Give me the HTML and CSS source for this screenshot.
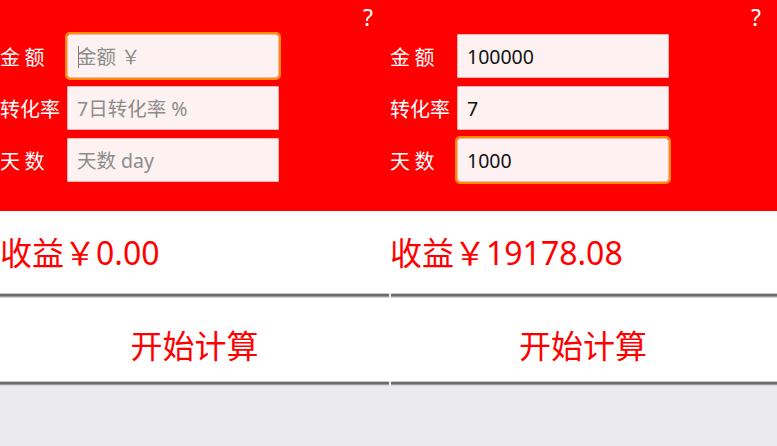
FILE: index.html
```html
<!DOCTYPE html>
<html lang="zh-CN">
<head>
<meta charset="utf-8">
<title>收益计算</title>
<link rel="stylesheet" href="styles.css">
</head>
<body>
<div class="app">
  <section class="screen screen-left">
    <div class="header">
      <div class="help">?</div>
      <div class="row">
        <label class="label">金 额</label>
        <div class="field focused caret"><input class="input" type="text" placeholder="金额 ￥"></div>
      </div>
      <div class="row">
        <label class="label">转化率</label>
        <div class="field"><input class="input" type="text" placeholder="7日转化率 %"></div>
      </div>
      <div class="row">
        <label class="label">天 数</label>
        <div class="field"><input class="input" type="text" placeholder="天数 day"></div>
      </div>
    </div>
    <div class="result">收益￥0.00</div>
    <div class="divider"></div>
    <div class="button">开始计算</div>
    <div class="divider"></div>
    <div class="rest"></div>
  </section>
  <section class="screen screen-right">
    <div class="header">
      <div class="help">?</div>
      <div class="row">
        <label class="label">金 额</label>
        <div class="field"><input class="input" type="text" value="100000"></div>
      </div>
      <div class="row">
        <label class="label">转化率</label>
        <div class="field"><input class="input" type="text" value="7"></div>
      </div>
      <div class="row">
        <label class="label">天 数</label>
        <div class="field focused"><input class="input" type="text" value="1000"></div>
      </div>
    </div>
    <div class="result">收益￥19178.08</div>
    <div class="divider"></div>
    <div class="button">开始计算</div>
    <div class="divider"></div>
    <div class="rest"></div>
  </section>
</div>
</body>
</html>
```

FILE: styles.css
```css
html, body {
  margin: 0;
  padding: 0;
}

body {
  width: 777px;
  height: 446px;
  overflow: hidden;
  background: #ebebed;
  font-family: "Noto Sans", "Noto Sans CJK SC", sans-serif;
}

.app {
  display: flex;
  width: 777px;
  height: 446px;
}

.screen {
  display: flex;
  flex-direction: column;
  height: 446px;
}

.screen-left {
  width: 389px;
}

.screen-right {
  width: 388px;
}

.header {
  background: #ff0000;
  height: 211px;
  box-sizing: border-box;
  display: flex;
  flex-direction: column;
  gap: 8px;
}

.help {
  height: 26px;
  color: #ffffff;
  font-size: 23px;
  line-height: 34px;
  text-align: right;
  padding-right: 16px;
}

.row {
  display: flex;
  align-items: center;
  height: 44px;
}

.label {
  flex: none;
  width: 67px;
  color: #ffffff;
  font-size: 20px;
  font-weight: 400;
  white-space: pre;
  font-family: "Noto Sans CJK SC", sans-serif;
}

.screen-right .label {
  width: 68px;
  padding-left: 1px;
  margin-right: -1px;
}

.field {
  position: relative;
  width: 212px;
  height: 44px;
  box-sizing: border-box;
  border: 1px solid #f0b6b6;
  background: #fdf1f1;
  border-radius: 1px;
}

.field.focused {
  outline: 2px solid #ff8c00;
  outline-offset: 0;
  border-radius: 3px;
}

.caret::after {
  content: "";
  position: absolute;
  left: 10px;
  top: 11px;
  width: 1px;
  height: 22px;
  background: #7a7a7a;
}

.input {
  display: block;
  width: 100%;
  height: 100%;
  box-sizing: border-box;
  border: 0;
  margin: 0;
  padding: 0 0 0 9px;
  background: transparent;
  font-family: "Noto Sans", "Noto Sans CJK SC", sans-serif;
  font-size: 19.5px;
  color: #111111;
  outline: none;
}

.input::placeholder {
  color: #8c8c8c;
  opacity: 1;
}

.result {
  background: #ffffff;
  height: 82px;
  box-sizing: border-box;
  padding-bottom: 2px;
  display: flex;
  align-items: center;
  color: #ff0000;
  font-size: 32px;
  white-space: nowrap;
}

.screen-right .result {
  padding-left: 1px;
}

.divider {
  height: 5px;
  background: linear-gradient(to bottom, #c8c8c8 0, #c8c8c8 1px, #6c6c6c 1px, #6c6c6c 3px, #9a9a9a 3px, #9a9a9a 4px, #d6d6d6 4px);
}

.screen-right .divider {
  margin-left: 2px;
}

.button {
  background: #ffffff;
  height: 83px;
  box-sizing: border-box;
  padding-top: 8px;
  display: flex;
  align-items: center;
  justify-content: center;
  color: #ff0000;
  font-size: 32px;
  font-family: "Noto Sans CJK SC", sans-serif;
}

.rest {
  flex: 1;
  background: #ebebed;
}
```
